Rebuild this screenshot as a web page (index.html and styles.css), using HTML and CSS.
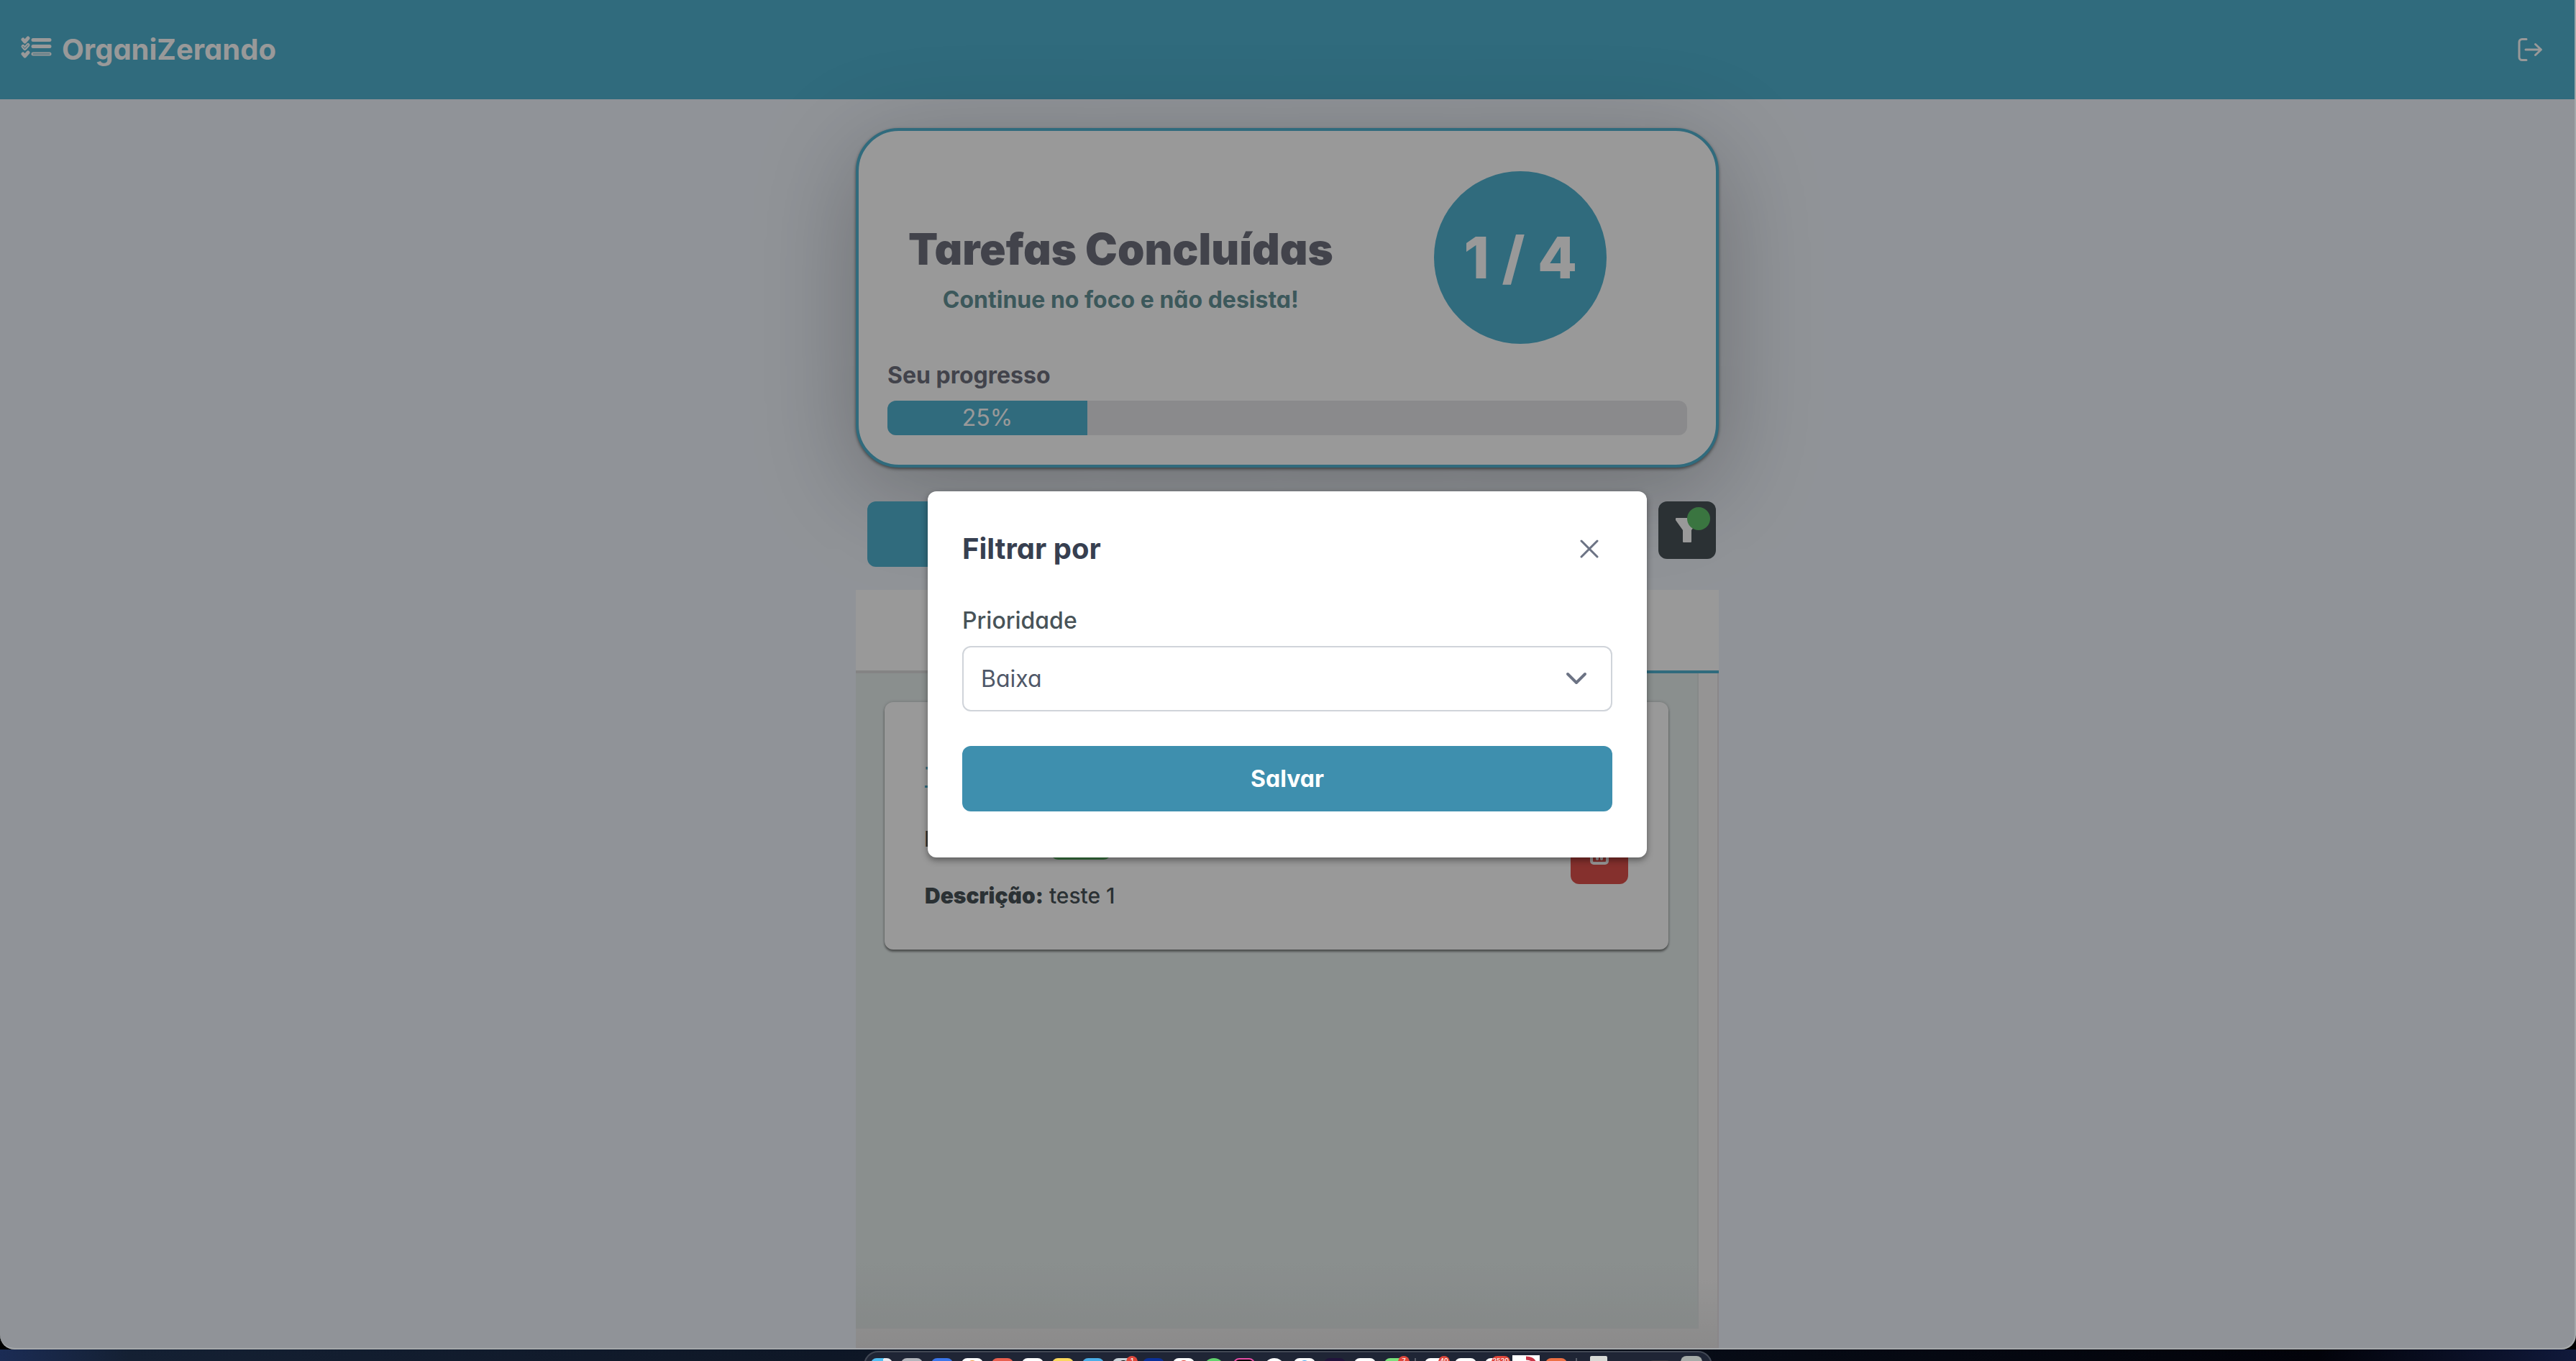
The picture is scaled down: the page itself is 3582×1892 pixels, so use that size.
FILE: index.html
```html
<!DOCTYPE html>
<html lang="pt-BR">
<head>
<meta charset="utf-8">
<title>OrganiZerando</title>
<link rel="stylesheet" href="styles.css">
</head>
<body>
<div class="window">
  <header class="navbar">
    <a class="brand" href="#">
      <svg class="brand-icon" width="44" height="32" viewBox="0 0 44 32" fill="none" stroke="currentColor" stroke-linecap="round" stroke-linejoin="round" aria-hidden="true">
        <path d="M18 6.500h23M18 15.500h23M18 26h23" stroke-width="5"/>
        <path d="M4 6l2.500 3 4.500-5M4 26l2.500 3 4.500-5" stroke-width="5"/>
        <path d="M4 15.500l2.500 3 4.500-5" stroke-width="5"/>
        <path class="brand-hollow" d="M4 15.500l2.500 3 4.500-5M18 26h23" stroke-width="1"/>
      </svg>
      <span>OrganiZerando</span>
    </a>
    <button class="logout" type="button" aria-label="Sair">
      <svg width="36" height="34" viewBox="0 0 36 34" fill="none" stroke="currentColor" stroke-width="3" stroke-linecap="round" stroke-linejoin="round" aria-hidden="true">
        <path d="M13 2.500H7a4 4 0 0 0-4 4v21a4 4 0 0 0 4 4h6M12 17h21M25.500 9.500l8 7.500-8 7.500"/>
      </svg>
    </button>
  </header>

  <main class="container">
    <section class="summary">
      <div class="summary-top">
        <div class="summary-text">
          <h1>Tarefas Concluídas</h1>
          <p>Continue no foco e não desista!</p>
        </div>
        <div class="counter">1 / 4</div>
      </div>
      <h2 class="progress-label">Seu progresso</h2>
      <div class="progress"><div class="progress-bar" style="width:25%">25%</div></div>
    </section>

    <div class="actions">
      <button class="btn btn-primary new-task" type="button" aria-label="Nova tarefa"></button>
      <button class="btn-filter" type="button" aria-label="Filtrar">
        <svg width="32" height="36" viewBox="0 0 32 36" fill="currentColor" aria-hidden="true">
          <path d="M1 1h30a1 1 0 0 1 1 1v2L22 18v16a1 1 0 0 1-1 1H11a1 1 0 0 1-1-1V18L0 4V2a1 1 0 0 1 1-1z"/>
        </svg>
        <span class="filter-dot"></span>
      </button>
    </div>

    <section class="board">
      <nav class="tabs">
        <a class="tab" href="#" aria-label="Pendentes"></a>
        <a class="tab tab-active" href="#" aria-label="Concluídas"></a>
      </nav>
      <div class="panel">
        <div class="task-list">
          <article class="task">
            <div class="task-body">
              <h3><a href="#">Teste</a></h3>
              <p class="task-priority"><strong>Prioridade:</strong><span class="tag">Baixa</span></p>
              <p><strong>Descrição:</strong> teste 1</p>
            </div>
            <button class="btn-delete" type="button" aria-label="Excluir">
              <svg width="32" height="32" viewBox="0 0 32 32" fill="none" stroke="currentColor" stroke-width="4" stroke-linecap="round" stroke-linejoin="round" aria-hidden="true">
                <path d="M2 6h28M11 5V2h10v3M5 7v17a3 3 0 0 0 3 3h16a3 3 0 0 0 3-3V7M13 12v9M19 12v9"/>
              </svg>
            </button>
          </article>
        </div>
      </div>
    </section>
  </main>

  <div class="backdrop">
    <dialog class="modal" open aria-labelledby="modal-title">
      <div class="modal-header">
        <h2 id="modal-title">Filtrar por</h2>
        <button class="modal-close" type="button" aria-label="Fechar">
          <svg width="32" height="32" viewBox="0 0 32 32" fill="none" stroke="currentColor" stroke-width="3" stroke-linecap="round" aria-hidden="true"><path d="M5 5l22 22M27 5L5 27"/></svg>
        </button>
      </div>
      <form>
        <label for="priority">Prioridade</label>
        <div class="select">
          <select id="priority"><option>Baixa</option><option>Média</option><option>Alta</option></select>
          <svg width="32" height="32" viewBox="0 0 32 32" fill="none" stroke="currentColor" stroke-width="4" stroke-linecap="round" stroke-linejoin="round" aria-hidden="true"><path d="M4 10l12 12 12-12"/></svg>
        </div>
        <button class="btn btn-save" type="button">Salvar</button>
      </form>
    </dialog>
  </div>
</div>

<footer class="desktop">
  <div class="dock">
    <span class="app finder"></span>
    <span class="app silver"></span>
    <span class="app blue"></span>
    <span class="app"><i class="peek orange"></i></span>
    <span class="app red"></span>
    <span class="app"></span>
    <span class="app yellow"></span>
    <span class="app sky"></span>
    <span class="app gray"><i class="peek black"></i><b class="count">1</b></span>
    <span class="app navy"></span>
    <span class="app"><i class="peek crimson"></i></span>
    <span class="app green round"></span>
    <span class="app pink"></span>
    <span class="app round"></span>
    <span class="app"><i class="peek azure"></i></span>
    <span class="app purple"></span>
    <span class="app"></span>
    <span class="app lime"><b class="count">7</b></span>
    <span class="divider"></span>
    <span class="app"><b class="count">40</b></span>
    <span class="app"></span>
    <span class="app"><b class="count">2520</b></span>
    <span class="app tile">
      <svg width="38" height="10" viewBox="0 0 38 10" fill="none" stroke="#c93445" stroke-width="5" aria-hidden="true"><path d="M19 4q10 0 12 7"/></svg>
    </span>
    <span class="app tangerine"></span>
    <span class="divider"></span>
    <span class="app files"></span>
    <span class="app shade"></span>
    <span class="app bin"></span>
  </div>
</footer>
</body>
</html>
```
FILE: styles.css
```css
* { box-sizing: border-box; }

:root {
  --primary: #50b2d0;
  --primary-strong: #3e8fae;
  --ink: #485358;
  --heading: #6e707e;
}

body {
  margin: 0;
  min-height: 100vh;
  display: flex;
  flex-direction: column;
  background: #000;
  font-family: Inter, "Liberation Sans", sans-serif;
  font-feature-settings: "cv03", "cv04", "cv11";
  font-size: 32px;
  line-height: 46px;
  color: var(--ink);
}

h1, h2, h3, p { margin: 0; }

button, select {
  font: inherit;
  font-feature-settings: inherit;
  border: 0;
  padding: 0;
}

svg { display: block; }

/* Browser window */
.window {
  position: relative;
  flex: 1;
  display: flex;
  flex-direction: column;
  overflow: hidden;
  background: #f1f6fd;
  border: solid #a5a8aa;
  border-width: 0 2px 2px 0;
  border-radius: 0 0 20px 20px;
}

.navbar {
  flex: none;
  display: flex;
  align-items: center;
  justify-content: space-between;
  height: 138px;
  padding: 0 44px 0 28px;
  background: var(--primary);
  color: #fff;
}

.brand {
  display: flex;
  align-items: center;
  gap: 14px;
  color: inherit;
  font-size: 40px;
  font-weight: 700;
  text-decoration: none;
}

.brand-icon { margin-bottom: 8px; }
.brand-hollow { stroke: var(--primary); }
.logout { background: none; color: #fff; }

.container {
  flex: 1;
  display: flex;
  flex-direction: column;
  width: 100%;
  max-width: 1200px;
  margin: 0 auto;
  padding-top: 40px;
}

/* Summary card */
.summary {
  padding: 40px 40px 41px;
  background: #fff;
  border: 4px solid var(--primary);
  border-radius: 60px;
  box-shadow: 0 2px 4px rgba(0, 0, 0, .5), 0 32px 140px rgba(0, 0, 0, .25);
  color: var(--heading);
}

.summary-top {
  display: grid;
  grid-template-columns: 7fr 5fr;
  align-items: center;
  justify-items: center;
  padding: 16px 0 20px;
}

.summary-text {
  display: grid;
  gap: 12px;
  padding-top: 34px;
  text-align: center;
}

.summary-text h1 {
  font-size: 60px;
  font-weight: 900;
  line-height: 72px;
}

.summary-text p {
  color: #649398;
  font-weight: 700;
}

.counter {
  display: grid;
  place-items: center;
  width: 240px;
  height: 240px;
  border-radius: 50%;
  background: var(--primary);
  color: #fff;
  font-size: 80px;
  font-weight: 800;
}

.progress-label {
  margin-bottom: 11px;
  font-size: 32px;
  font-weight: 700;
  line-height: 48px;
}

.progress {
  display: flex;
  height: 48px;
  overflow: hidden;
  border-radius: 12px;
  background: #e6e7e9;
}

.progress-bar {
  background: var(--primary);
  color: #fff;
  line-height: 48px;
  text-align: center;
}

/* Actions */
.actions {
  display: flex;
  align-items: flex-start;
  gap: 16px;
  margin: 47px 4px 32px 16px;
}

.btn {
  height: 91px;
  border-radius: 12px;
  color: #fff;
  font-weight: 700;
}

.btn-primary { background: var(--primary); }
.new-task { flex: 1; }

.btn-filter, .btn-delete {
  position: relative;
  display: grid;
  place-items: center;
  flex: none;
  width: 80px;
  height: 80px;
  border-radius: 12px;
  color: #fff;
}

.btn-filter { background: #485358; }
.btn-delete { margin-top: 54px; background: #de514c; }

.filter-dot {
  position: absolute;
  top: 8px;
  right: 8px;
  width: 32px;
  height: 32px;
  border-radius: 50%;
  background: #61c36b;
}

/* Board */
.board {
  flex: 1;
  display: flex;
  flex-direction: column;
}

.tabs {
  display: grid;
  grid-template-columns: 1fr 1fr;
  background: #fff;
}

.tab {
  height: 116px;
  border-bottom: 4px solid #dcdcdc;
}

.tab-active { border-color: var(--primary); }

.panel {
  flex: 1;
  display: flex;
  padding: 0 26px 26px 0;
  background: linear-gradient(#f8f7f7 90%, #e8e7e7);
  border: solid #e6e2e4;
  border-width: 0 2px 1px 0;
}

.task-list {
  flex: 1;
  padding: 40px;
  background: linear-gradient(#e6eeed 90%, #dfe5e4);
  border: solid #dfe4e4;
  border-width: 0 2px 1px 0;
}

.task {
  display: flex;
  align-items: center;
  justify-content: space-between;
  padding: 80px 56px 52px;
  background: #fff;
  border-radius: 12px;
  box-shadow: 0 3px 3px rgba(0, 0, 0, .4), 0 0 4px rgba(0, 0, 0, .2);
  font-size: 30px;
}

.task-body { display: grid; gap: 33px; }
.task h3 { margin-bottom: 8px; font-size: 32px; font-weight: 600; }
.task h3 a { color: var(--primary); }
.task p { font-weight: 500; }
.task strong { font-weight: 900; }

.task-priority {
  display: flex;
  align-items: center;
  gap: 4px;
}

.tag {
  width: 86px;
  border-radius: 12px;
  margin-bottom: -12px;
  background: #61c36b;
  color: #fff;
  font-size: 24px;
  text-align: center;
}

/* Filter dialog */
.backdrop {
  position: absolute;
  inset: 0;
  display: grid;
  place-items: center;
  background: rgba(0, 0, 0, .4);
}

.modal {
  position: static;
  width: 1000px;
  margin: 0;
  padding: 48px 48px 64px;
  background: #fff;
  border: 0;
  border-radius: 12px;
  box-shadow: 0 4px 10px rgba(0, 0, 0, .4);
  color: var(--ink);
}

.modal-header {
  display: flex;
  align-items: center;
  justify-content: space-between;
  height: 64px;
  padding-right: 16px;
  margin-bottom: 44px;
  color: #373f50;
}

.modal-header h2 { font-size: 40px; font-weight: 700; }
.modal-close { background: none; color: #6c7384; }
.modal label { display: block; margin-bottom: 11px; font-weight: 500; line-height: 48px; }

.select {
  position: relative;
  margin-bottom: 48px;
  color: #6c7384;
}

.select select {
  display: block;
  width: 100%;
  height: 91px;
  padding: 2px 24px 0;
  appearance: none;
  background: #fff;
  border: 2px solid #d0d4da;
  border-radius: 12px;
  color: #4f5868;
}

.select svg {
  position: absolute;
  top: 29px;
  right: 34px;
  pointer-events: none;
}

.btn-save {
  display: block;
  width: 100%;
  padding-top: 2px;
  background: var(--primary-strong);
}

/* Desktop strip and dock */
.desktop {
  flex: none;
  display: flex;
  justify-content: center;
  height: 16px;
  padding-top: 2px;
  overflow: hidden;
  background: linear-gradient(90deg, #1b2c55, #142033 5%, #0a111e 50%, #02030a 90%, #10193b);
}

.dock {
  display: flex;
  align-items: flex-start;
  gap: 12px;
  height: 60px;
  padding: 8px 12px 0 8px;
  background: #1f2535;
  border: 2px solid #414754;
  border-radius: 20px;
}

.app {
  position: relative;
  display: flex;
  justify-content: center;
  width: 30px;
  height: 30px;
  border-radius: 8px;
  background: #fff;
}

.round { border-radius: 50%; }
.finder { background: linear-gradient(100deg, #4fbdf2 50%, #e9e9ee 50%); }
.silver { background: #b2b5bc; }
.blue { background: #3b76ea; }
.red { background: #e9604f; }
.yellow { background: #fbd85e; }
.sky { background: #4baee8; }
.gray { background: #c9d3d9; }
.navy { background: #0a309a; }
.green { background: #62d36d; }
.pink { background: #000; border: 2px solid #e94fa8; }
.purple { background: #21133c; }
.lime { background: #7be27c; }
.tangerine { background: #ed7044; }
.tile { width: 38px; margin: -4px -4px 0; border-radius: 0; }
.files { width: 24px; margin: -3px 0 0 6px; border-radius: 2px; background: #d8dad6; }
.shade { width: 34px; margin: 3px 0 0 44px; background: #33353c; }
.bin { margin-top: -3px; background: #a5aba8; }

.peek {
  width: 14px;
  height: 14px;
  margin-top: 3px;
  border-radius: 50%;
}

.orange { background: #f19b3b; }
.black { background: #111; }
.crimson { background: #e0453a; }
.azure { background: #4ba8ea; }

.count {
  position: absolute;
  top: -3px;
  right: -5px;
  min-width: 16px;
  height: 16px;
  padding: 0 2px;
  border-radius: 8px;
  background: #e0483c;
  color: #fff;
  font-size: 9px;
  font-weight: 500;
  line-height: 14px;
  text-align: center;
}

.divider { width: 2px; height: 30px; background: #5b606b; }
```
